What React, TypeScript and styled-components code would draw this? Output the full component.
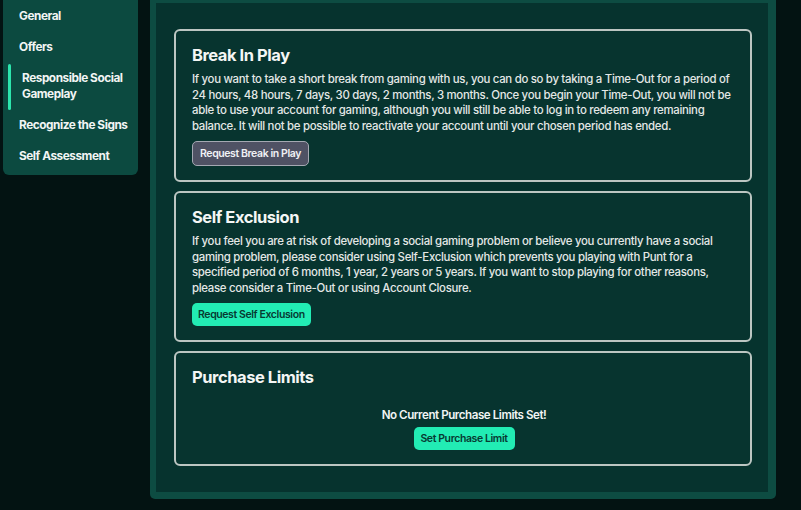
import React from "react";
import styled, { createGlobalStyle } from "styled-components";

const Global = createGlobalStyle`
  html, body { margin: 0; padding: 0; background: #031312; }
  body { font-family: Inter, "Noto Sans", Arial, sans-serif; color: #eef1f0; }
  * { box-sizing: border-box; }
`;

const Page = styled.div`
  display: flex;
  align-items: flex-start;
  gap: 12px;
  padding-left: 3px;
  width: 801px;
  height: 510px;
  overflow: hidden;
`;

const Sidebar = styled.nav`
  width: 135px;
  flex: none;
  background: #0c4a40;
  border-radius: 0 0 6px 6px;
  padding: 1.5px 0 3px;
  display: flex;
  flex-direction: column;
`;

const NavItem = styled.div<{ $active?: boolean }>`
  position: relative;
  padding: 7.75px 4px 7.75px ${(p) => (p.$active ? "19px" : "16px")};
  font-size: 11.8px;
  line-height: 15.5px;
  font-weight: 700;
  letter-spacing: -0.45px;
  color: #f2f5f4;
  &::before {
    content: "";
    display: ${(p) => (p.$active ? "block" : "none")};
    position: absolute;
    left: 5px;
    top: 0;
    bottom: 0;
    width: 3px;
    background: #2ce6ad;
    border-radius: 2px;
  }
`;

const Frame = styled.main`
  width: 626px;
  flex: none;
  background: #0d4c42;
  padding: 3px 8px 7px 6px;
  border-radius: 0 0 5px 5px;
`;

const Inner = styled.div`
  background: #06332e;
  padding: 26px 16px 26px 18px;
  display: flex;
  flex-direction: column;
  gap: 9px;
`;

const Card = styled.section`
  border: 2px solid #bcc6c2;
  border-radius: 6px;
  background: #07342f;
  padding: 13px 14px 14px 16px;
  display: flex;
  flex-direction: column;
`;

const Title = styled.h2`
  margin: 0 0 6px;
  font-size: 16.5px;
  line-height: 22px;
  font-weight: 700;
  letter-spacing: -0.45px;
  color: #f4f6f5;
`;

const Body = styled.p`
  margin: 0;
  font-size: 11.4px;
  line-height: 15.5px;
  font-weight: 500;
  letter-spacing: -0.3px;
  color: #e4e8e6;
`;

const Button = styled.button<{ $variant?: "grey" | "teal" }>`
  align-self: flex-start;
  margin-top: 7px;
  height: ${(p) => (p.$variant === "grey" ? "25px" : "23px")};
  padding: 0 ${(p) => (p.$variant === "grey" ? "7px" : "6px")};
  border-radius: 5px;
  font-family: Inter, Arial, sans-serif;
  font-size: 10.5px;
  font-weight: 600;
  letter-spacing: -0.4px;
  cursor: pointer;
  white-space: nowrap;
  border: ${(p) => (p.$variant === "grey" ? "1px solid #a4a8b2" : "none")};
  background: ${(p) => (p.$variant === "grey" ? "#4f5264" : "#22ecb4")};
  color: ${(p) => (p.$variant === "grey" ? "#f0f1f4" : "#073a32")};
`;

const Center = styled.div`
  display: flex;
  flex-direction: column;
  align-items: center;
  padding-top: 13px;
`;

const Notice = styled.div`
  font-size: 11.6px;
  line-height: 16px;
  font-weight: 600;
  letter-spacing: -0.45px;
  color: #f2f5f4;
`;

const CenterButton = styled(Button)`
  align-self: center;
  margin-top: 4px;
  width: 101px;
  padding: 0;
`;

export default function App() {
  return (
    <>
      <Global />
      <Page>
        <Sidebar>
          <NavItem>General</NavItem>
          <NavItem>Offers</NavItem>
          <NavItem $active>Responsible Social Gameplay</NavItem>
          <NavItem>Recognize the Signs</NavItem>
          <NavItem>Self Assessment</NavItem>
        </Sidebar>
        <Frame>
          <Inner>
            <Card>
              <Title>Break In Play</Title>
              <Body>
                If you want to take a short break from gaming with us, you can do so by taking a Time-Out for a period of
                24 hours, 48 hours, 7 days, 30 days, 2 months, 3 months. Once you begin your Time-Out, you will not be
                able to use your account for gaming, although you will still be able to log in to redeem any remaining
                balance. It will not be possible to reactivate your account until your chosen period has ended.
              </Body>
              <Button $variant="grey">Request Break in Play</Button>
            </Card>
            <Card>
              <Title>Self Exclusion</Title>
              <Body>
                If you feel you are at risk of developing a social gaming problem or believe you currently have a social
                gaming problem, please consider using Self-Exclusion which prevents you playing with Punt for a
                specified period of 6 months, 1 year, 2 years or 5 years. If you want to stop playing for other reasons,
                please consider a Time-Out or using Account Closure.
              </Body>
              <Button $variant="teal">Request Self Exclusion</Button>
            </Card>
            <Card>
              <Title>Purchase Limits</Title>
              <Center>
                <Notice>No Current Purchase Limits Set!</Notice>
                <CenterButton $variant="teal">Set Purchase Limit</CenterButton>
              </Center>
            </Card>
          </Inner>
        </Frame>
      </Page>
    </>
  );
}
